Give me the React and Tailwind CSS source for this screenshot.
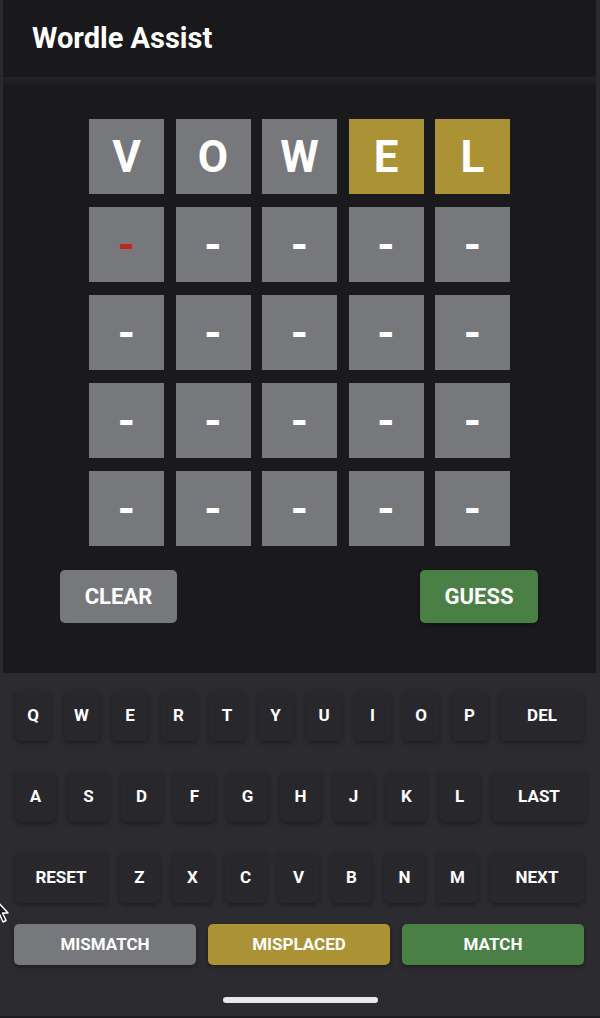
const GRID = [
  ['V', 'O', 'W', 'E', 'L'],
  ['-', '-', '-', '-', '-'],
  ['-', '-', '-', '-', '-'],
  ['-', '-', '-', '-', '-'],
  ['-', '-', '-', '-', '-'],
];

const TILE_COLORS = [
  ['gray', 'gray', 'gray', 'gold', 'gold'],
];

const tileBg = {
  gray: 'bg-[#77787c]',
  gold: 'bg-[#aa9235]',
};

function Tile({ letter, color, active }) {
  return (
    <div
      className={`w-[75px] h-[75px] flex items-center justify-center text-[44px] font-bold leading-none ${tileBg[color]} ${
        active ? 'text-[#c0281c]' : 'text-white'
      }`}
    >
      {letter}
    </div>
  );
}

function Key({ label, width }) {
  return (
    <div
      className={`${width} flex-none h-[51px] flex items-center justify-center rounded-md bg-[#28272b] shadow-[0_2px_5px_rgba(0,0,0,0.35)] text-white text-[17px] font-bold`}
    >
      {label}
    </div>
  );
}

export default function App() {
  const row1 = ['Q', 'W', 'E', 'R', 'T', 'Y', 'U', 'I', 'O', 'P'];
  const row2 = ['A', 'S', 'D', 'F', 'G', 'H', 'J', 'K', 'L'];
  const row3 = ['Z', 'X', 'C', 'V', 'B', 'N', 'M'];

  return (
    <div
      className="relative w-[600px] h-[1018px] bg-[#2a292d] flex flex-col overflow-hidden"
      style={{ fontFamily: 'Roboto, "Liberation Sans", sans-serif' }}
    >
      {/* top app bar */}
      <div className="ml-[3px] mr-[4px] h-[77px] bg-[#19181b] flex items-center pl-[29px]">
        <h1 className="text-white text-[29px] font-bold">Wordle Assist</h1>
      </div>

      {/* board */}
      <div className="ml-[3px] mr-[4px] flex-1 bg-[#1a191c] flex flex-col">
        <div className="h-[10px] bg-gradient-to-b from-[#242327] to-[#1a191c]" />
        <div className="pt-[32px] flex flex-col items-center gap-y-[13px]">
          {GRID.map((row, r) => (
            <div key={r} className="flex gap-x-[11.5px]">
              {row.map((letter, c) => (
                <Tile
                  key={c}
                  letter={letter}
                  color={(TILE_COLORS[r] && TILE_COLORS[r][c]) || 'gray'}
                  active={r === 1 && c === 0}
                />
              ))}
            </div>
          ))}
        </div>
        <div className="mt-[24px] flex justify-between pl-[57px] pr-[58px]">
          <button className="w-[117px] h-[53px] rounded-[5px] bg-[#77787c] text-white text-[22px] font-bold">
            CLEAR
          </button>
          <button className="w-[118px] h-[53px] rounded-[5px] bg-[#4a8046] text-white text-[22px] font-bold shadow-[0_2px_4px_rgba(0,0,0,0.4)]">
            GUESS
          </button>
        </div>
      </div>

      {/* keyboard */}
      <div className="h-[343px] bg-[#2c2b30] flex flex-col pl-[15px] pr-[14px] pt-[17px]">
        <div className="flex gap-x-[12.5px]">
          {row1.map((k) => (
            <Key key={k} label={k} width="w-[36px]" />
          ))}
          <Key label="DEL" width="w-[84px]" />
        </div>
        <div className="mt-[30px] flex gap-x-[12px]">
          {row2.map((k) => (
            <Key key={k} label={k} width="w-[41px]" />
          ))}
          <Key label="LAST" width="w-[94px]" />
        </div>
        <div className="mt-[30px] flex gap-x-[12px]">
          <Key label="RESET" width="w-[92px]" />
          {row3.map((k) => (
            <Key key={k} label={k} width="w-[41px]" />
          ))}
          <Key label="NEXT" width="w-[94px]" />
        </div>
        <div className="mt-[21px] -ml-[1px] flex gap-x-[12px]">
          <button className="w-[182px] flex-none h-[41px] rounded-[5px] bg-[#77787c] text-white text-[17px] font-bold shadow-[0_2px_4px_rgba(0,0,0,0.35)]">
            MISMATCH
          </button>
          <button className="w-[182px] flex-none h-[41px] rounded-[5px] bg-[#aa9235] text-white text-[17px] font-bold shadow-[0_2px_4px_rgba(0,0,0,0.35)]">
            MISPLACED
          </button>
          <button className="w-[182px] flex-none h-[41px] rounded-[5px] bg-[#4a8046] text-white text-[17px] font-bold shadow-[0_2px_4px_rgba(0,0,0,0.35)]">
            MATCH
          </button>
        </div>
        <div className="mt-[32px] flex justify-center">
          <div className="w-[155px] h-[6px] rounded-full bg-[#e8e8ea]" />
        </div>
      </div>
      <div className="h-[2px] bg-[#1d1c20]" />

      {/* mouse pointer at the left edge */}
      <svg
        className="absolute left-[-6px] top-[898px]"
        width="16"
        height="28"
        viewBox="0 0 16 28"
      >
        <path d="M1 1 L1 20 L5.5 16 L9 24 L12 22.5 L8.5 15 L14 15 Z" fill="#111" stroke="#fff" strokeWidth="1.5" strokeLinejoin="round" />
      </svg>
    </div>
  );
}
